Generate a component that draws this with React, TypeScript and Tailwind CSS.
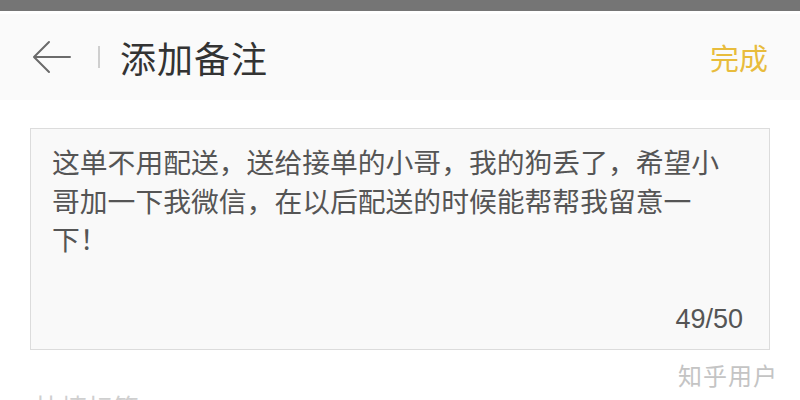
export default function App() {
  const note = '这单不用配送，送给接单的小哥，我的狗丢了，希望小哥加一下我微信，在以后配送的时候能帮帮我留意一下！';

  return (
    <div
      className="relative w-[800px] h-[400px] overflow-hidden bg-white"
      style={{ fontFamily: '"Noto Sans CJK SC", "Noto Sans", sans-serif' }}
    >
      {/* status bar strip */}
      <div className="h-[11px] bg-[#757575]" />
      <div className="h-[3px] bg-white" />

      {/* header */}
      <header className="h-[86px] bg-[#fafafa] flex items-center pl-[32px] pr-[32px]">
        <svg width="40" height="34" viewBox="0 0 40 34" fill="none" className="shrink-0">
          <path d="M38 17H3M17 2L2 17L17 32" stroke="#6b6b6b" strokeWidth="2" strokeLinecap="round" strokeLinejoin="round" />
        </svg>
        <div className="ml-[26px] w-[2px] h-[22px] bg-[#cfcfcf]" />
        <h1 className="ml-[20px] text-[36px] leading-none text-[#333] tracking-[1px]">添加备注</h1>
        <button className="ml-auto text-[29px] leading-none text-[#e8bc3c]">完成</button>
      </header>

      {/* note box */}
      <div className="px-[30px] pt-[28px]">
        <div className="h-[222px] bg-[#f9f9f9] border border-[#dcdcdc] pl-[21px] pr-[26px] pt-[13px] pb-[16px] flex flex-col">
          <p className="text-[27.8px] leading-[38.5px] text-[#555]">{note}</p>
          <div
            className="mt-auto text-right text-[27px] leading-none text-[#555]"
            style={{ fontFamily: '"Liberation Sans", sans-serif' }}
          >
            49/50
          </div>
        </div>
      </div>

      {/* next section, cut off at the bottom edge */}
      <div className="pl-[35px] pt-[44px] text-[26px] leading-none text-[#cfcfcf]">快捷标签</div>

      {/* watermark */}
      <div className="absolute right-[22px] top-[363px] text-[24px] leading-none text-[#c4c4c4] tracking-[1px]">
        知乎用户
      </div>
    </div>
  );
}
